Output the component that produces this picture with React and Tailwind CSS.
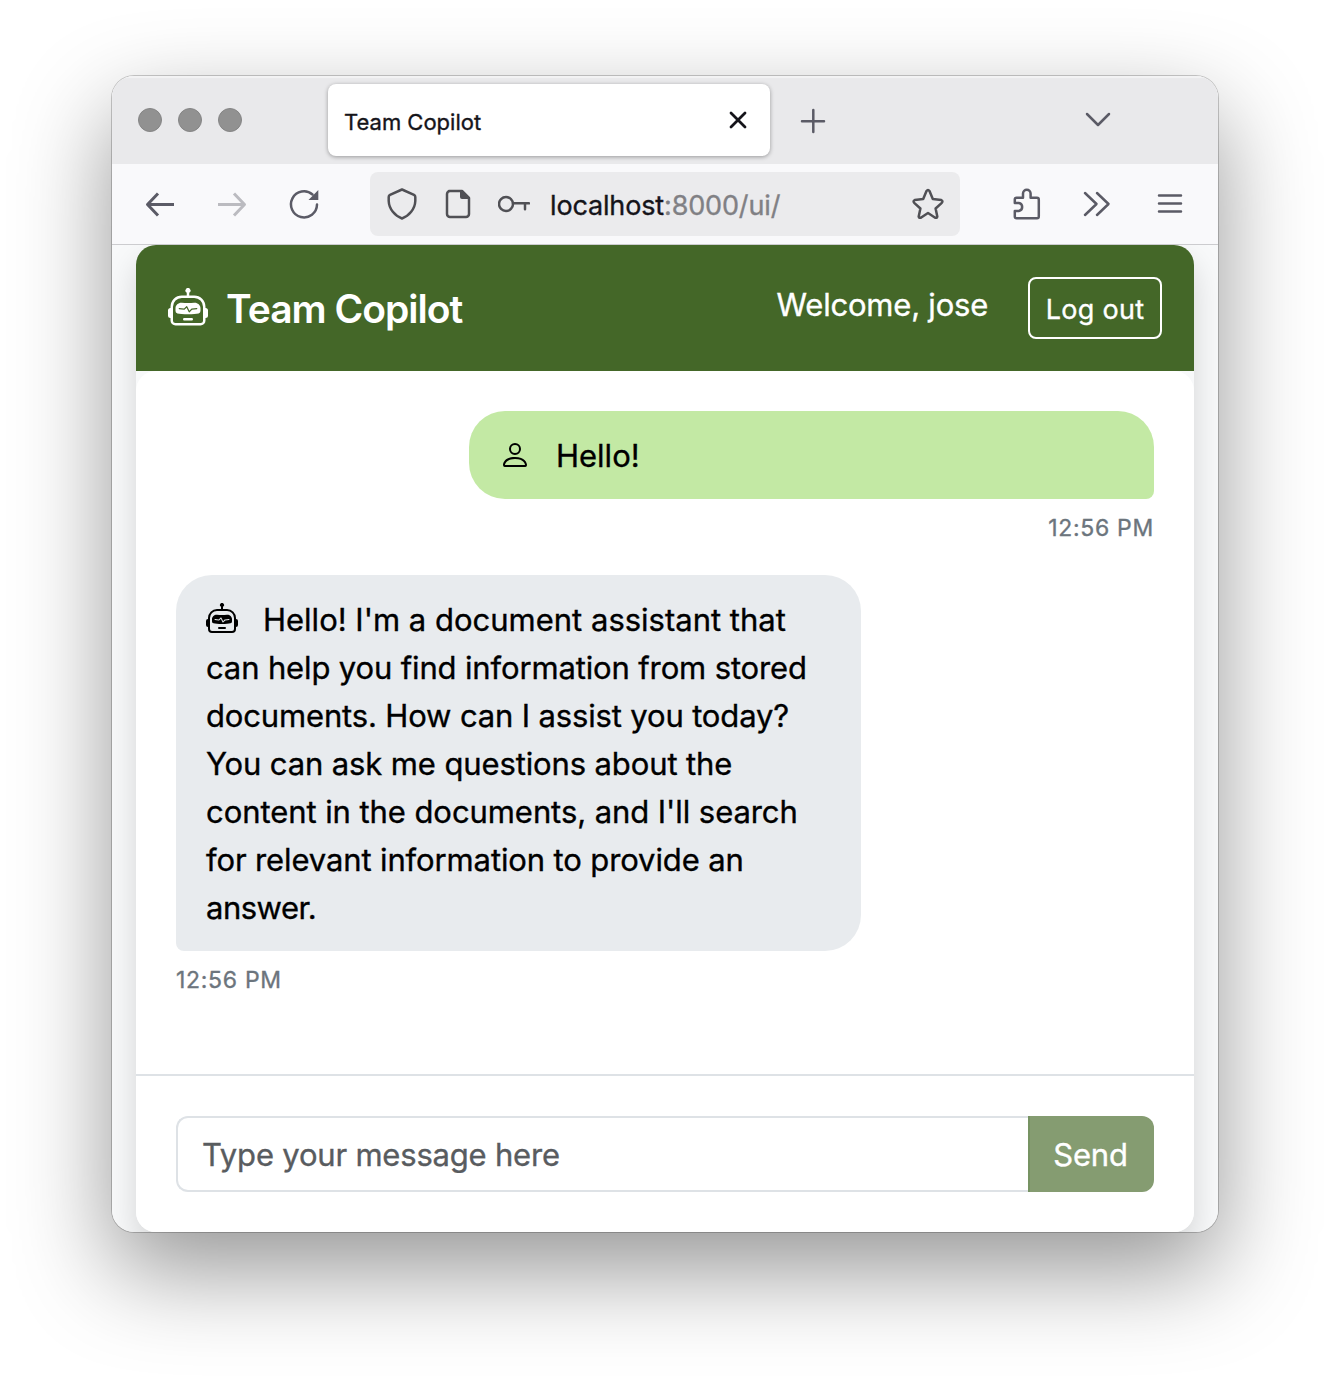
import { BsPerson, BsRobot } from 'react-icons/bs';

function Icon({ className = '', width = 32, height = 32, children }) {
  return (
    <svg
      className={`shrink-0 ${className}`}
      width={width}
      height={height}
      viewBox={`0 0 ${width} ${height}`}
      fill="none"
      stroke="currentColor"
      strokeWidth="2.5"
      strokeLinecap="round"
      strokeLinejoin="round"
    >
      {children}
    </svg>
  );
}

function TabBar() {
  return (
    <div className="flex h-[88px] items-start bg-[#e9e9eb] pt-2 text-[#5b5b66] shadow-[inset_0_2px_1px_#f3f3f4]">
      <div className="ml-[26px] mt-6 flex gap-4">
        <span className="size-6 rounded-full border border-[#858585] bg-[#919191]" />
        <span className="size-6 rounded-full border border-[#858585] bg-[#919191]" />
        <span className="size-6 rounded-full border border-[#858585] bg-[#919191]" />
      </div>
      <div className="ml-[86px] flex h-[72px] w-[442px] items-center justify-between rounded-lg bg-white pl-4 pr-4 text-[#15141a] shadow-[0_1px_4px_rgba(0,0,0,0.35)]">
        <span className="mt-1 text-[22px]">Team Copilot</span>
        <Icon>
          <path d="M9 9l14 14M23 9L9 23" strokeWidth="2.8" />
        </Icon>
      </div>
      <Icon className="ml-[27px] mt-[21px]">
        <path d="M16.300 5v22M5 16.300h22" />
      </Icon>
      <Icon className="ml-[253px] mt-5">
        <path d="M5 10l11 11 11-11" />
      </Icon>
    </div>
  );
}

function Toolbar() {
  return (
    <div className="flex h-[81px] items-start border-b border-[#cccccf] bg-[#f9f9fb] pt-2 text-[#5b5b66]">
      <div className="flex h-16 items-center">
        <Icon className="ml-8">
          <path d="M30 16.500H4M14 5.500L3.500 16.500L14 27.500" strokeLinecap="butt" strokeWidth="3" />
        </Icon>
        <Icon className="ml-10 text-[#bbbbc0]">
          <path d="M2 16.500h26M18 5.500L28.500 16.500L18 27.500" strokeLinecap="butt" strokeWidth="3" />
        </Icon>
        <Icon className="ml-10">
          <path d="M29 16.500A13 13 0 1 1 24.500 6.500" />
          <path d="M30.300 2v10H20.500z" fill="currentColor" stroke="none" />
        </Icon>
      </div>
      <div className="ml-[50px] flex h-16 w-[590px] items-center rounded-lg bg-[#ebebed] px-4 text-[#505055]">
        <Icon>
          <path d="M16 1.500L28 6.800Q29.300 7.400 29.300 9V13C29 21 23 28 16 30.500C9 28 3 21 2.700 13V9Q2.700 7.400 4 6.800Z" />
        </Icon>
        <Icon className="ml-6">
          <path d="M7 3h13l7 7v16a3 3 0 0 1-3 3H8a3 3 0 0 1-3-3V6a3 3 0 0 1 3-3z" />
          <path d="M18 2h2l8 8v1h-8a2 2 0 0 1-2-2z" fill="currentColor" stroke="none" />
        </Icon>
        <Icon className="ml-6">
          <circle cx="8" cy="16" r="7" />
          <path d="M15 15.300h16M27 15.300v6" />
        </Icon>
        <span className="ml-5 mt-[5px] text-[27px] tracking-[-0.15px] text-[#15141a]">
          localhost<span className="text-[#808084]">:8000/ui/</span>
        </span>
        <Icon className="ml-auto">
          <path d="M14.500 3q1.500-2 3 0l3.300 8 8.500 1q2 1 .5 2.800l-6.200 5.700 1.700 8q-.3 2-2.500 1L16 25l-6.800 4.500q-2.200 1-2.500-1l1.700-8L2.200 14.800q-1.500-1.800.5-2.800l8.500-1z" />
        </Icon>
      </div>
      <div className="flex h-16 items-center">
        <Icon className="ml-[51px]">
          <path d="M3.800 15V11.500q0-1.800 1.800-1.800H12V5.500a3.800 3.800 0 0 1 7.600 0v4.200H26q1.800 0 1.800 1.800v17q0 1.800-1.800 1.800H5.600Q3.800 30.300 3.800 28.500v-5.600h4a4 4 0 0 0 0-7.900z" />
        </Icon>
        <Icon className="ml-[38px]">
          <path d="M4 5l11.500 11L4 27M16 5l11.500 11L16 27" />
        </Icon>
        <Icon className="ml-[41px]">
          <path d="M5 7.500h22M5 15.500h22M5 23.500h22" />
        </Icon>
      </div>
    </div>
  );
}

function Header() {
  return (
    <header className="flex h-[126px] shrink-0 items-center rounded-t-[20px] bg-[#446728] px-8 text-white">
      <BsRobot className="size-10" />
      <h1 className="ml-[18px] mt-0.5 text-[39px] font-semibold tracking-[-1px] [-webkit-text-stroke:0px]">Team Copilot</h1>
      <span className="mb-[5px] ml-auto text-[31px] tracking-[-0.22px]">Welcome, jose</span>
      <button className="ml-10 h-[62px] w-[134px] rounded-lg border-2 border-white pt-1 text-[27px] tracking-[0.3px]">
        Log out
      </button>
    </header>
  );
}

function Conversation() {
  return (
    <main className="flex h-[703px] shrink-0 flex-col rounded-t-[20px] bg-white px-10 pt-10 text-[31px] leading-[48px] text-black">
      <div className="flex h-[88px] w-[685px] items-center self-end rounded-[36px] rounded-br-lg bg-[#c3e9a4] px-[30px]">
        <BsPerson className="size-8" />
        <span className="ml-[25px] mt-0.5">Hello!</span>
      </div>
      <time className="mt-[11px] self-end text-[23px] leading-9 tracking-[0.7px] text-[#6c757d]">12:56 PM</time>
      <div className="mt-[29px] w-[685px] self-start whitespace-nowrap rounded-[36px] rounded-bl-lg bg-[#e8ebee] px-[30px] pb-[19px] pt-[21px]">
        <p>
          <BsRobot className="-mt-2 mr-[25px] inline size-8 align-middle" />
          <span>Hello! I'm a document assistant that</span>
          <br />
          <span className="tracking-[-0.14px]">can help you find information from stored</span>
          <br />
          <span className="tracking-[-0.15px]">documents. How can I assist you today?</span>
          <br />
          <span className="tracking-[-0.12px]">You can ask me questions about the</span>
          <br />
          <span className="tracking-[-0.07px]">content in the documents, and I'll search</span>
          <br />
          <span className="tracking-[-0.12px]">for relevant information to provide an</span>
          <br />
          <span className="tracking-[-0.5px]">answer.</span>
        </p>
      </div>
      <time className="mt-[11px] text-[23px] leading-9 tracking-[0.7px] text-[#6c757d]">12:56 PM</time>
    </main>
  );
}

function Composer() {
  return (
    <form className="flex h-[158px] shrink-0 rounded-b-[20px] border-t-2 border-[#dee2e6] bg-white p-10 text-[31px]">
      <input
        className="h-[76px] min-w-0 flex-1 rounded-l-xl border-2 border-r-0 border-[#dee2e6] px-6 tracking-[-0.2px] placeholder:text-[#595c5f] placeholder:opacity-100"
        placeholder="Type your message here"
      />
      <button
        type="button"
        className="h-[76px] w-[126px] rounded-r-xl border-l-2 border-[#779363] bg-[#859c71] pr-[3px] pt-0.5 tracking-[-0.2px] text-white"
      >
        Send
      </button>
    </form>
  );
}

export default function App() {
  return (
    <div className="h-[1380px] w-[1330px] overflow-hidden bg-white pl-28 pt-[76px] font-['Inter','Liberation_Sans',sans-serif] [-webkit-text-stroke:0.35px]">
      <div className="w-[1106px] rounded-[22px] shadow-[0_0_0_1px_rgba(0,0,0,0.2),0_38px_96px_rgba(0,0,0,0.42)]">
        <div className="h-[1156px] overflow-hidden rounded-[22px] bg-[#f8f9fa]">
          <TabBar />
          <Toolbar />
          <div className="h-[987px] overflow-hidden px-6">
            <div className="flex h-[987px] flex-col rounded-[20px] bg-[#f8f9fa] shadow-[0_16px_32px_rgba(0,0,0,0.15)]">
              <Header />
              <Conversation />
              <Composer />
            </div>
          </div>
        </div>
      </div>
    </div>
  );
}
